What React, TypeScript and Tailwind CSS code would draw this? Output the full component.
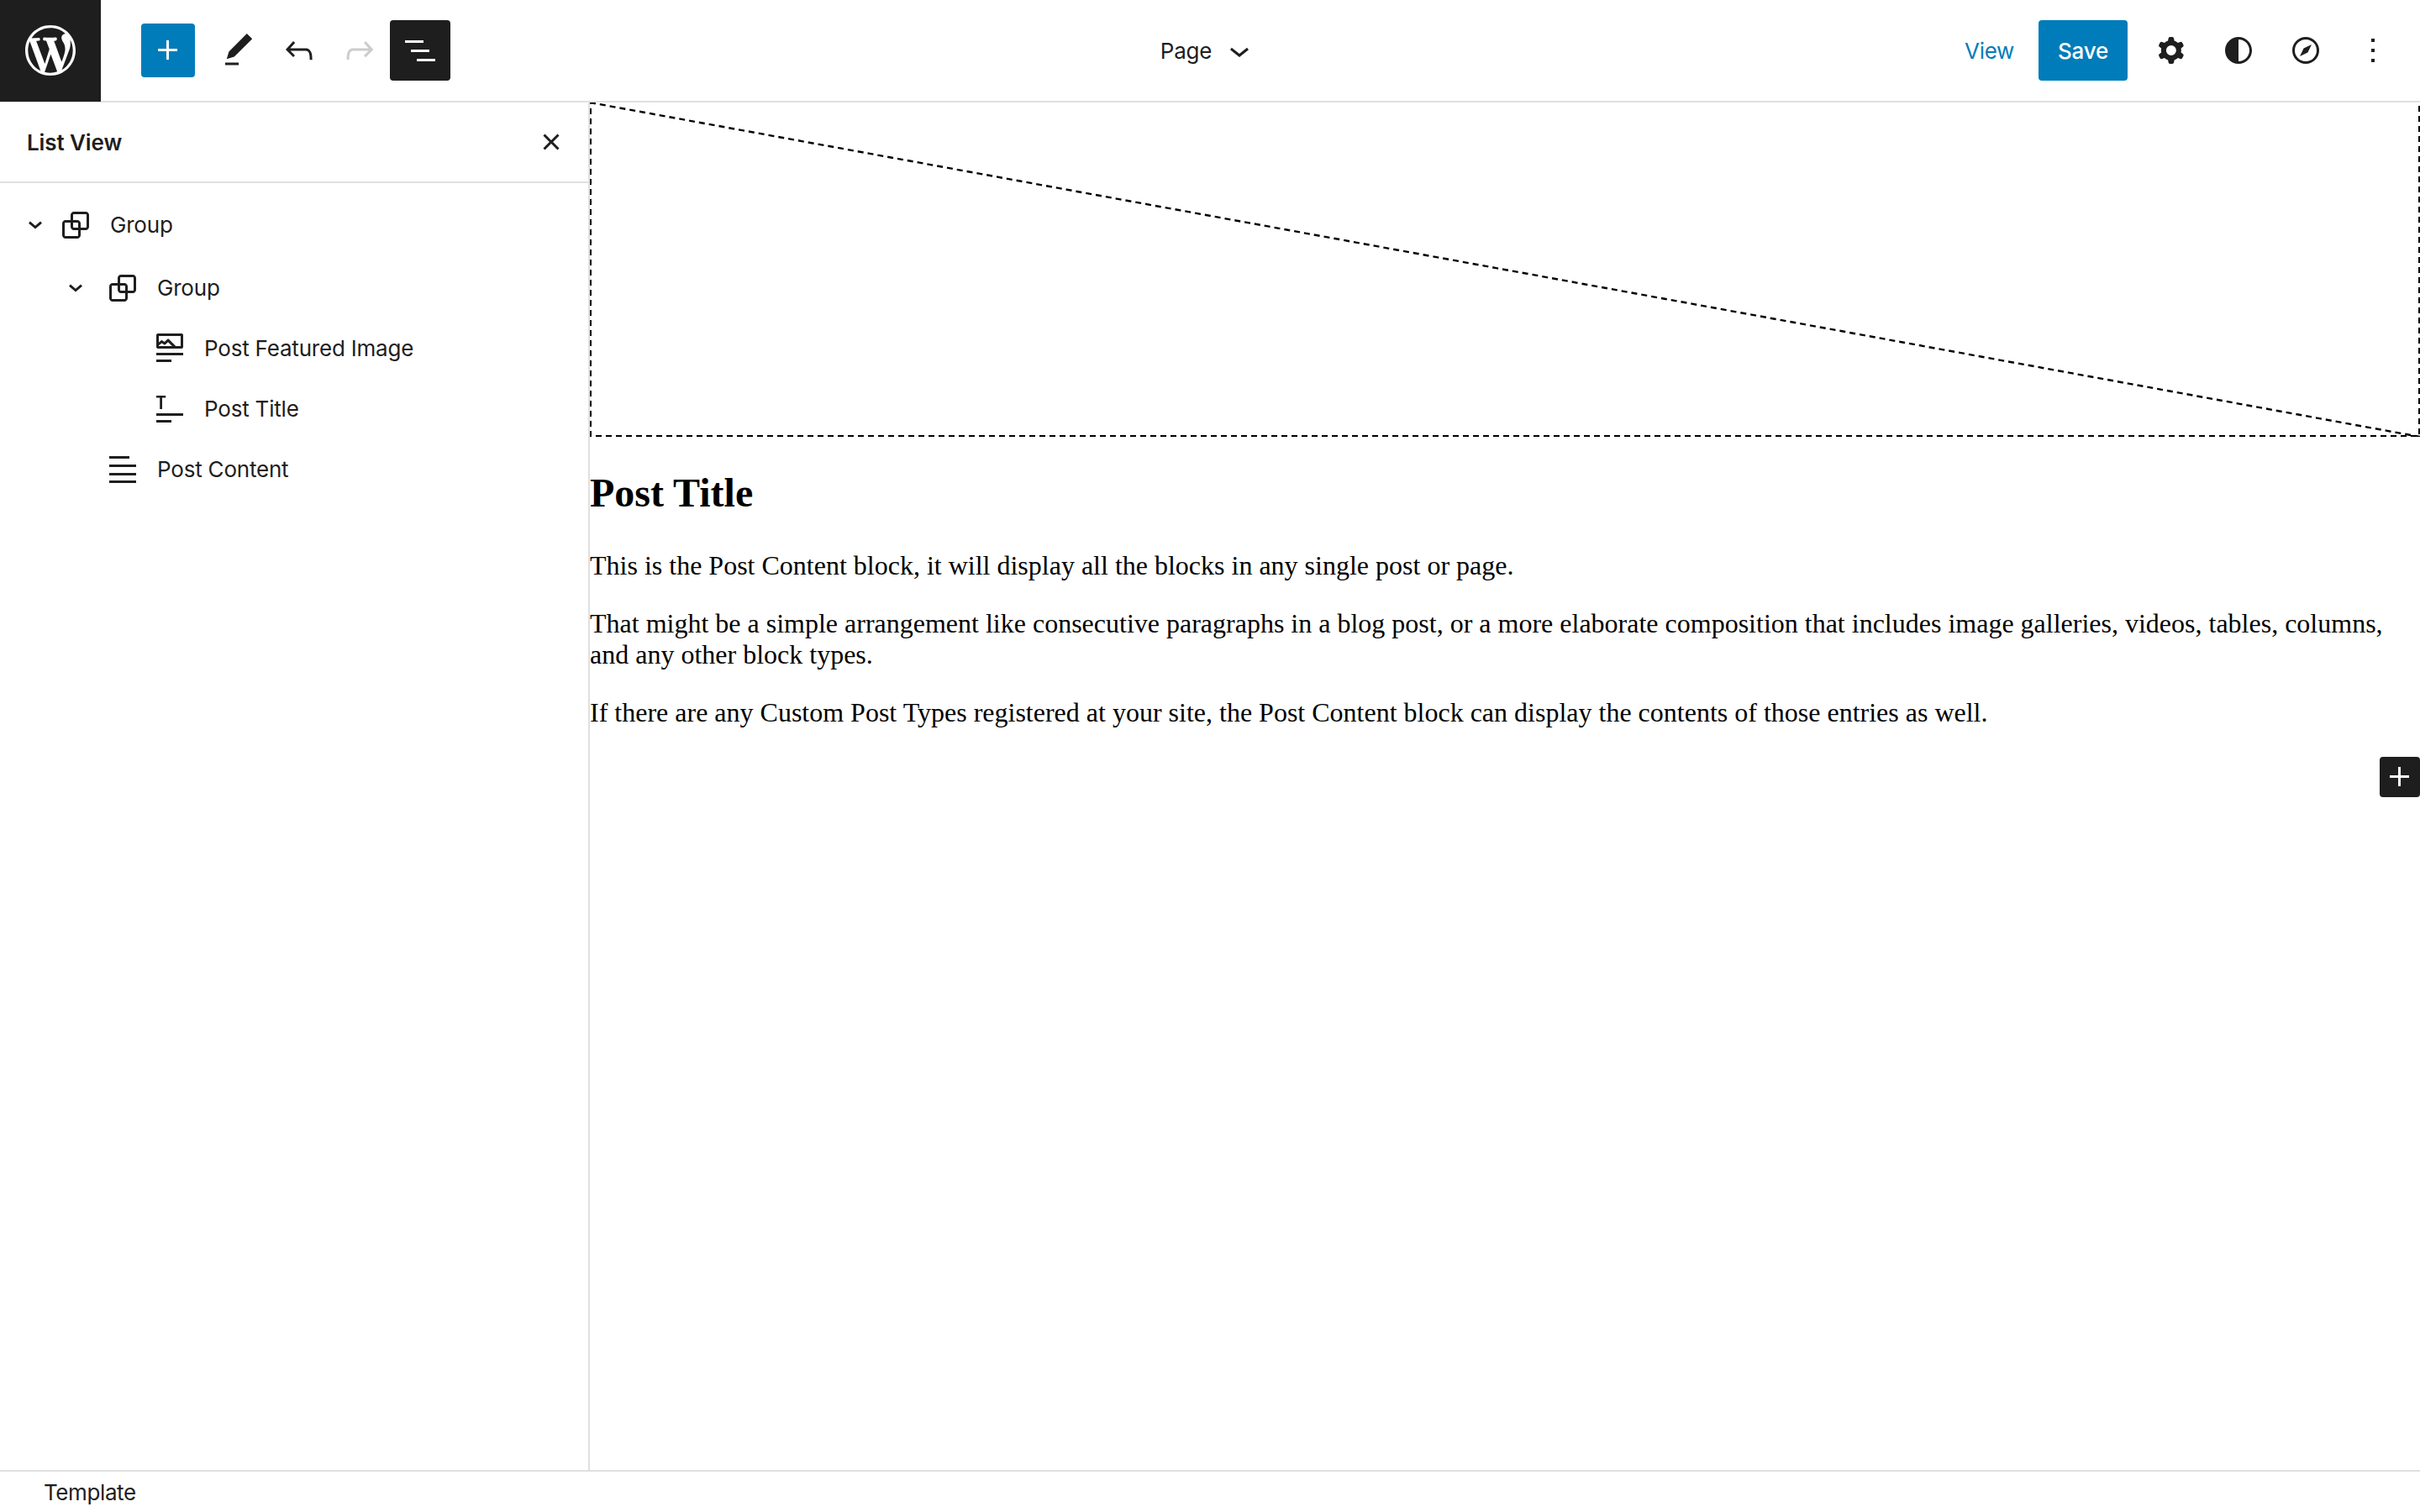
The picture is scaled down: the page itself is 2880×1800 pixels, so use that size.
import React from "react";

const I = ({ d, s = 48, c = "fill-[#1e1e1e]", vb = 24, eo = false }: { d: string; s?: number; c?: string; vb?: number; eo?: boolean }) => (
  <svg width={s} height={s} viewBox={`0 0 ${vb} ${vb}`} className={c}>
    <path d={d} fillRule={eo ? "evenodd" : "nonzero"} clipRule={eo ? "evenodd" : "nonzero"} />
  </svg>
);

const P = {
  plus: "M11 12.5V17.5H12.5V12.5H17.5V11H12.5V6H11V11H6V12.5H11Z",
  edit: "M20.1 5.1L16.9 2 6.2 12.7l-1.3 4.4 4.5-1.3L20.1 5.1zM4 20.8h8v-1.5H4v1.5z",
  undo: "M18.3 11.7c-.6-.6-1.4-.9-2.3-.9H6.7l2.9-3.3-1.1-1-4.5 5L8.5 16l1-1-2.7-2.7H16c.5 0 .9.2 1.3.5 1 1 1 3.4 1 4.5v.3h1.5v-.2c0-1.5 0-4.3-1.5-5.7z",
  redo: "M15.6 6.5l-1.1 1 2.9 3.3H8c-.9 0-1.7.3-2.3.9-1.4 1.5-1.4 4.2-1.4 5.6v.2h1.5v-.3c0-1.1 0-3.5 1-4.5.3-.3.7-.5 1.3-.5h9.2L14.5 15l1.1 1.1 4.6-4.6-4.6-5z",
  list: "M3 6h11v1.5H3V6Zm3.5 5.5h11V13h-11v-1.5ZM21 17H10v1.5h11V17Z",
  close: "M12 13.06l3.712 3.713 1.061-1.06L13.061 12l3.712-3.712-1.06-1.06L12 10.938 8.288 7.227l-1.061 1.06L10.939 12l-3.712 3.712 1.06 1.061L12 13.061z",
  chevSmall: "m15.99 10.889-3.988 3.418-3.988-3.418.976-1.14 3.012 2.582 3.012-2.581.976 1.139Z",
  chev: "M17.5 11.6L12 16l-5.5-4.4.9-1.2L12 14l4.5-3.6 1 1.2z",
  group: "M18 4h-7c-1.1 0-2 .9-2 2v3H6c-1.1 0-2 .9-2 2v7c0 1.1.9 2 2 2h7c1.1 0 2-.9 2-2v-3h3c1.1 0 2-.9 2-2V6c0-1.1-.9-2-2-2zm-4.5 14c0 .3-.2.5-.5.5H6c-.3 0-.5-.2-.5-.5v-7c0-.3.2-.5.5-.5h3V13c0 1.1.9 2 2 2h2.5v3zm0-4.5H11c-.3 0-.5-.2-.5-.5v-2.5H13c.3 0 .5.2.5.5v2.5zm5-.5c0 .3-.2.5-.5.5h-3V11c0-1.1-.9-2-2-2h-2.5V6c0-.3.2-.5.5-.5h7c.3 0 .5.2.5.5v7z",
  featured: "M19 3H5c-.6 0-1 .4-1 1v7c0 .5.4 1 1 1h14c.5 0 1-.4 1-1V4c0-.6-.4-1-1-1zM5.5 10.5v-.4l1.8-1.3 1.3.8c.3.2.7.2.9-.1L11 8.1l2.4 2.4H5.5zm13 0h-2.9l-4-4c-.3-.3-.8-.3-1.1 0L8.9 8l-1.2-.8c-.3-.2-.6-.2-.9 0l-1.3 1V4.5h13v6zM4 20h9v-1.5H4V20zm0-4h16v-1.5H4V16z",
  title: "M4 4h5.6v1.2h-2.1V12H6.1V5.2H4V4zM4 14.5h16V16H4zM4 18.5h9V20H4z",
  content: "M4 4h12v1.5H4zM4 9h16v1.5H4zM4 14h16v1.5H4zM4 18.5h16V20H4z",
  cog: "M10.289 4.836A1 1 0 0111.275 4h1.306a1 1 0 01.987.836l.244 1.466c.787.26 1.503.679 2.108 1.218l1.393-.522a1 1 0 011.216.437l.653 1.13a1 1 0 01-.23 1.273l-1.148.944a6.025 6.025 0 010 2.435l1.149.946a1 1 0 01.23 1.272l-.653 1.13a1 1 0 01-1.216.437l-1.394-.522c-.605.54-1.32.958-2.108 1.218l-.244 1.466a1 1 0 01-.987.836h-1.306a1 1 0 01-.986-.836l-.244-1.466a5.995 5.995 0 01-2.108-1.218l-1.394.522a1 1 0 01-1.217-.436l-.653-1.131a1 1 0 01.23-1.272l1.149-.946a6.026 6.026 0 010-2.435l-1.148-.944a1 1 0 01-.23-1.272l.653-1.131a1 1 0 011.217-.437l1.393.522a5.994 5.994 0 012.108-1.218l.244-1.466zM14.929 12a3 3 0 11-6 0 3 3 0 016 0z",
  styles: "M12 4c-4.4 0-8 3.6-8 8s3.6 8 8 8 8-3.6 8-8-3.6-8-8-8zm0 14.5v-13c3.6 0 6.5 2.9 6.5 6.5s-2.9 6.5-6.5 6.5z",
  compass: "M12 4a8 8 0 1 0 0 16 8 8 0 0 0 0-16Zm0 1.5a6.5 6.5 0 1 1 0 13 6.5 6.5 0 0 1 0-13ZM15.5 8.5l-2.3 4.7-4.7 2.3 2.3-4.7 4.7-2.3Z",
  more: "M13 19h-2v-2h2v2zm0-6h-2v-2h2v2zm0-6h-2V5h2v2z",
  wp: "M20 10c0-5.51-4.49-10-10-10C4.48 0 0 4.49 0 10c0 5.52 4.48 10 10 10 5.51 0 10-4.48 10-10zM7.78 15.37L4.37 6.22c.55-.02 1.17-.08 1.17-.08.5-.06.44-1.13-.06-1.11 0 0-1.45.11-2.37.11-.18 0-.37 0-.58-.01C4.12 2.69 6.87 1.11 10 1.11c2.33 0 4.45.87 6.05 2.34-.68-.11-1.65.39-1.65 1.58 0 .74.45 1.36.9 2.1.35.61.55 1.36.55 2.46 0 1.49-1.4 5-1.4 5l-3.03-8.37c.54-.02.82-.17.82-.17.5-.05.44-1.25-.06-1.22 0 0-1.44.12-2.38.12-.87 0-2.33-.12-2.33-.12-.5-.03-.56 1.2-.06 1.22l.92.08 1.26 3.41zM17.41 10c.24-.64.74-1.87.43-4.25.7 1.29 1.05 2.71 1.05 4.25 0 3.29-1.73 6.24-4.4 7.78.97-2.59 1.94-5.2 2.92-7.78zM6.1 18.09C3.12 16.65 1.11 13.53 1.11 10c0-1.3.23-2.48.72-3.59C3.25 10.3 4.67 14.2 6.1 18.09zm4.03-6.63l2.58 6.98c-.86.29-1.76.45-2.71.45-.79 0-1.57-.11-2.29-.33.81-2.38 1.62-4.74 2.42-7.1z",
};

const IconBtn = ({ d, c, eo }: { d: string; c?: string; eo?: boolean }) => (
  <div className="flex h-[72px] w-[72px] items-center justify-center">
    <I d={d} c={c} eo={eo} />
  </div>
);

const Row = ({ level, chevron, icon, label, extra }: { level: number; chevron?: boolean; icon: string; label: string; extra?: string }) => (
  <div className={`flex h-[72px] items-center ${extra ?? ""}`}>
    <div className={level === 0 ? "w-[18px] shrink-0" : level === 1 ? "w-[66px] shrink-0" : "w-[122px] shrink-0"} />
    <div className={level === 0 ? "flex h-12 w-12 shrink-0 items-center justify-center" : "mr-2 flex h-12 w-12 shrink-0 items-center justify-center"}>
      {chevron ? <I d={P.chevSmall} s={48} /> : null}
    </div>
    <I d={icon} />
    <span className="ml-[17px] text-[26px] leading-[36px] tracking-[-0.2px] text-[#1e1e1e]">{label}</span>
  </div>
);

export default function App() {
  return (
    <div className="relative flex h-screen w-full flex-col overflow-hidden bg-white font-['Inter','Liberation_Sans',sans-serif] text-[#1e1e1e]">
      <header className="flex h-[122px] shrink-0 border-b-2 border-[#e0e0e0]">
        <div className="flex flex-1 items-center">
          <div className="flex h-[122px] w-[120px] shrink-0 items-center justify-center bg-[#1e1e1e]">
            <I d={P.wp} s={60} vb={20} c="fill-white" eo />
          </div>
          <div className="ml-12 flex h-16 w-16 items-center justify-center rounded-[4px] bg-[#007cba]">
            <I d={P.plus} c="fill-white" />
          </div>
          <div className="ml-4 flex items-center">
            <IconBtn d={P.edit} />
            <IconBtn d={P.undo} />
            <IconBtn d={P.redo} c="fill-[#cccccc]" />
            <div className="flex h-[72px] w-[72px] items-center justify-center rounded-[4px] bg-[#1e1e1e]">
              <I d={P.list} c="fill-white" />
            </div>
          </div>
        </div>
        <div className="flex items-center">
          <span className="text-[26px] tracking-[-0.2px]">Page</span>
          <span className="ml-[9px]"><I d={P.chev} /></span>
        </div>
        <div className="flex flex-1 items-center justify-end">
          <span className="mr-[29px] text-[26px] tracking-[-0.3px] text-[#007cba]">View</span>
          <div className="flex h-[72px] w-[106px] items-center justify-center rounded-[4px] bg-[#007cba] text-[26px] font-medium tracking-[-0.2px] text-white">Save</div>
          <div className="ml-4 mr-5 flex items-center gap-2">
            <IconBtn d={P.cog} eo />
            <IconBtn d={P.styles} eo />
            <IconBtn d={P.compass} eo />
            <IconBtn d={P.more} />
          </div>
        </div>
      </header>
      <div className="flex min-h-0 flex-1">
        <aside className="w-[702px] shrink-0 border-r-2 border-[#e0e0e0]">
          <div className="flex h-[96px] items-center justify-between border-b-2 border-[#e0e0e0] pl-8 pr-[20px]">
            <span className="text-[26px] font-semibold tracking-[-0.1px]">List View</span>
            <I d={P.close} />
          </div>
          <div className="pt-[14px]">
            <Row level={0} chevron icon={P.group} label="Group" />
            <Row level={1} chevron icon={P.group} label="Group" extra="mt-[3px]" />
            <Row level={2} icon={P.featured} label="Post Featured Image" />
            <Row level={2} icon={P.title} label="Post Title" />
            <Row level={1} icon={P.content} label="Post Content" />
          </div>
        </aside>
        <main className="min-w-0 flex-1 font-['Liberation_Serif',serif] text-[32px] leading-[37px] text-black">
          <div className="h-[398px]">
            <svg width="100%" height="100%" className="block" preserveAspectRatio="none" viewBox="0 0 2178 398">
              <rect x="1" y="-4" width="2176" height="401" fill="none" stroke="#000" strokeWidth="2" strokeDasharray="7 5" />
              <line x1="0" y1="0" x2="2178" y2="398" stroke="#000" strokeWidth="2.4" strokeDasharray="7 5" />
            </svg>
          </div>
          <h2 className="mt-[39px] text-[48px] font-bold leading-[55px]">Post Title</h2>
          <p className="mt-[41px]">This is the Post Content block, it will display all the blocks in any single post or page.</p>
          <p className="mt-[32px]">That might be a simple arrangement like consecutive paragraphs in a blog post, or a more elaborate composition that includes image galleries, videos, tables, columns, and any other block types.</p>
          <p className="mt-[32px]">If there are any Custom Post Types registered at your site, the Post Content block can display the contents of those entries as well.</p>
        </main>
      </div>
      <footer className="flex h-[50px] shrink-0 items-center border-t-2 border-[#e0e0e0] pl-[52px] text-[26px] tracking-[-0.4px]">Template</footer>
      <div className="absolute left-[2832px] top-[901px] flex h-12 w-12 items-center justify-center rounded-[4px] bg-[#1e1e1e]">
        <I d={P.plus} c="fill-white" />
      </div>
    </div>
  );
}
